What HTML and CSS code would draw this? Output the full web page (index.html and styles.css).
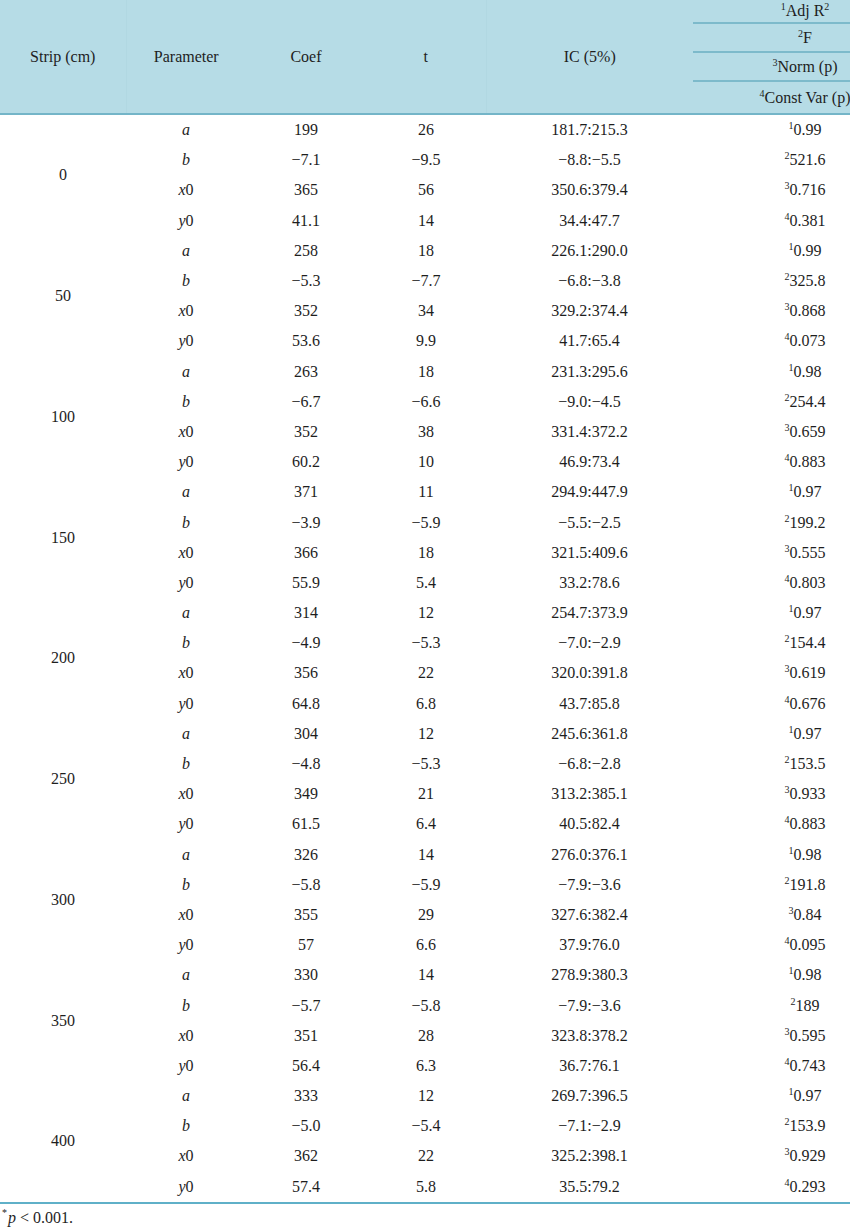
FILE: index.html
```html
<!DOCTYPE html>
<html>
<head>
<meta charset="utf-8">
<link rel="stylesheet" href="styles.css">
</head>
<body>
<div class="wrap">
<table class="tbl">
<colgroup>
<col class="c1"><col class="c2"><col class="c3"><col class="c4"><col class="c5"><col class="c6">
</colgroup>
<thead>
<tr class="h1">
<th rowspan="4" class="sep">Strip (cm)</th>
<th rowspan="4">Parameter</th>
<th rowspan="4">Coef</th>
<th rowspan="4" class="sep">t</th>
<th rowspan="4">IC (5%)</th>
<th class="sub"><sup>1</sup>Adj R<sup>2</sup></th>
</tr>
<tr class="h2"><th class="sub"><sup>2</sup>F</th></tr>
<tr class="h3"><th class="sub"><sup>3</sup>Norm (p)</th></tr>
<tr class="h4"><th class="last"><sup>4</sup>Const Var (p)</th></tr>
</thead>
<tbody id="body"></tbody>
</table>
</div>
<p class="note"><sup>*</sup><i>p</i> &lt; 0.001.</p>
<script src="script.js"></script>
</body>
</html>
```
FILE: script.js
```js
var data = [
 ["0", [["a","199","26","181.7:215.3","0.99"],["b","\u22127.1","\u22129.5","\u22128.8:\u22125.5","521.6"],["x0","365","56","350.6:379.4","0.716"],["y0","41.1","14","34.4:47.7","0.381"]]],
 ["50", [["a","258","18","226.1:290.0","0.99"],["b","\u22125.3","\u22127.7","\u22126.8:\u22123.8","325.8"],["x0","352","34","329.2:374.4","0.868"],["y0","53.6","9.9","41.7:65.4","0.073"]]],
 ["100", [["a","263","18","231.3:295.6","0.98"],["b","\u22126.7","\u22126.6","\u22129.0:\u22124.5","254.4"],["x0","352","38","331.4:372.2","0.659"],["y0","60.2","10","46.9:73.4","0.883"]]],
 ["150", [["a","371","11","294.9:447.9","0.97"],["b","\u22123.9","\u22125.9","\u22125.5:\u22122.5","199.2"],["x0","366","18","321.5:409.6","0.555"],["y0","55.9","5.4","33.2:78.6","0.803"]]],
 ["200", [["a","314","12","254.7:373.9","0.97"],["b","\u22124.9","\u22125.3","\u22127.0:\u22122.9","154.4"],["x0","356","22","320.0:391.8","0.619"],["y0","64.8","6.8","43.7:85.8","0.676"]]],
 ["250", [["a","304","12","245.6:361.8","0.97"],["b","\u22124.8","\u22125.3","\u22126.8:\u22122.8","153.5"],["x0","349","21","313.2:385.1","0.933"],["y0","61.5","6.4","40.5:82.4","0.883"]]],
 ["300", [["a","326","14","276.0:376.1","0.98"],["b","\u22125.8","\u22125.9","\u22127.9:\u22123.6","191.8"],["x0","355","29","327.6:382.4","0.84"],["y0","57","6.6","37.9:76.0","0.095"]]],
 ["350", [["a","330","14","278.9:380.3","0.98"],["b","\u22125.7","\u22125.8","\u22127.9:\u22123.6","189"],["x0","351","28","323.8:378.2","0.595"],["y0","56.4","6.3","36.7:76.1","0.743"]]],
 ["400", [["a","333","12","269.7:396.5","0.97"],["b","\u22125.0","\u22125.4","\u22127.1:\u22122.9","153.9"],["x0","362","22","325.2:398.1","0.929"],["y0","57.4","5.8","35.5:79.2","0.293"]]]
];
function param(p){
  if (p.length === 1) return '<i>' + p + '</i>';
  return '<i>' + p.charAt(0) + '</i>' + p.slice(1);
}
var html = '';
data.forEach(function(g){
  g[1].forEach(function(r, i){
    html += '<tr>';
    if (i === 0) html += '<td rowspan="4">' + g[0] + '</td>';
    html += '<td>' + param(r[0]) + '</td><td>' + r[1] + '</td><td>' + r[2] + '</td><td>' + r[3] + '</td><td><sup>' + (i+1) + '</sup>' + r[4] + '</td>';
    html += '</tr>';
  });
});
document.getElementById('body').innerHTML = html;
```
FILE: styles.css
```css
html, body {
  margin: 0;
  padding: 0;
  background: #ffffff;
  overflow-x: hidden;
}
body {
  font-family: "Liberation Serif", "Times New Roman", serif;
  font-size: 16px;
  color: #1e1e1e;
}
.wrap {
  width: 850px;
  overflow: hidden;
}
.tbl {
  width: 917px;
  border-collapse: collapse;
  table-layout: fixed;
}
.tbl th, .tbl td {
  font-family: "Liberation Serif", "Times New Roman", serif;
  font-size: 16px;
}
.c1 { width: 126px; }
.c2 { width: 120px; }
.c3 { width: 120px; }
.c4 { width: 120px; }
.c5 { width: 207px; }
.c6 { width: 224px; }
thead th {
  background: #b6dce6;
  font-weight: normal;
  padding: 0;
  text-align: center;
  vertical-align: middle;
  line-height: 18px;
}
th.sep { border-right: 1px solid #b1d8e2; }
th.sub { border-bottom: 2px solid #7dbacb; }
.h1 th.sub { height: 22px; }
.h2 th.sub, .h3 th.sub { height: 27px; }
.h4 th.last { height: 31px; }
thead { border-bottom: 2px solid #74b5c8; }
tbody td {
  padding: 0;
  height: 30.2px;
  text-align: center;
  vertical-align: middle;
  line-height: 18px;
}
tbody { border-bottom: 2px solid #5fb0c8; }
.tbl sup {
  font-size: 10px;
  line-height: 0;
  vertical-align: 6px;
}
.note {
  margin: 5px 0 0 2px;
  line-height: 18px;
}
.note sup {
  font-size: 10px;
  line-height: 0;
  vertical-align: 7px;
  margin-right: 1px;
}
```
